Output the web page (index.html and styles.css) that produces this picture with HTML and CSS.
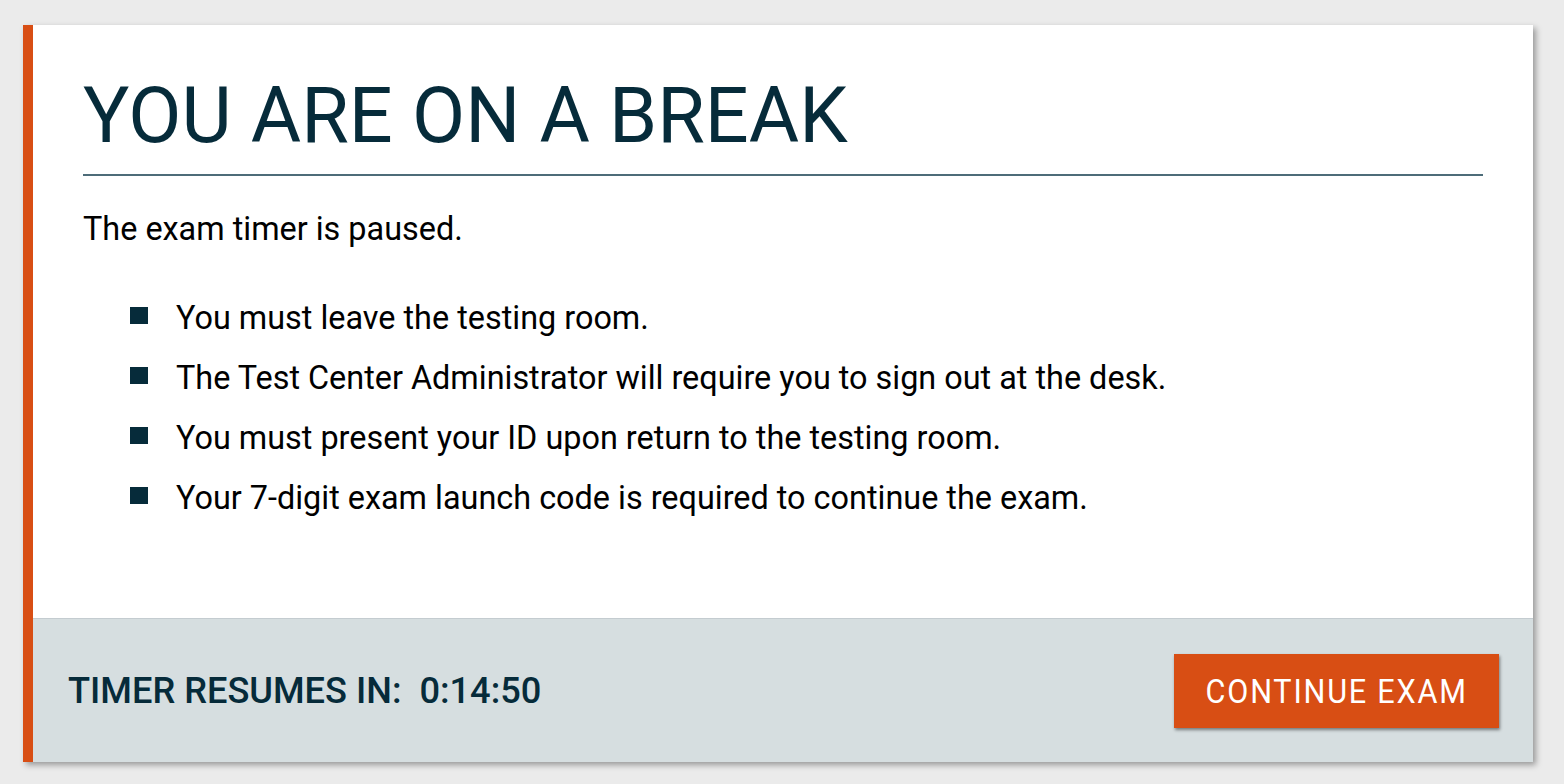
FILE: index.html
```html
<!DOCTYPE html>
<html lang="en">
<head>
    <meta charset="UTF-8">
    <title>Break</title>
    <link rel="stylesheet" href="styles.css">
</head>
<body>
    <div class="card">
        <div class="content">
            <h1>YOU ARE ON A BREAK</h1>
            <p class="intro">The exam timer is paused.</p>
            <ul class="rules">
                <li>You must leave the testing room.</li>
                <li>The Test Center Administrator will require you to sign out at the desk.</li>
                <li>You must present your ID upon return to the testing room.</li>
                <li>Your 7-digit exam launch code is required to continue the exam.</li>
            </ul>
        </div>
        <div class="footer">
            <div class="timer">TIMER RESUMES IN:&nbsp; 0:14:50</div>
            <button class="continue"><span>CONTINUE EXAM</span></button>
        </div>
    </div>
</body>
</html>
```

FILE: styles.css
```css
body {
    margin: 0;
    padding: 25px 31px 22px 23px;
    background: #ebebeb;
    font-family: Roboto, "Liberation Sans", sans-serif;
}
.card {
    height: 737px;
    box-sizing: border-box;
    background: #fff;
    border-left: 10px solid #d84e14;
    box-shadow: 3px 3px 6px rgba(0, 0, 0, 0.35);
    display: flex;
    flex-direction: column;
}
.content {
    flex: 1;
    padding: 0 50px;
}
h1 {
    margin: 0;
    padding: 51px 0 18px;
    font-size: 77.3px;
    font-weight: 400;
    line-height: 80px;
    color: #062b3a;
    border-bottom: 2px solid #4d6c79;
}
.intro {
    margin: 33px 0 0;
    font-size: 32.4px;
    line-height: 40px;
    color: #000;
}
.rules {
    list-style: none;
    margin: 49px 0 0;
    padding: 0 0 0 46px;
}
.rules li {
    position: relative;
    padding-left: 47px;
    font-size: 32.4px;
    line-height: 40px;
    margin-bottom: 20px;
    color: #000;
}
.rules li::before {
    content: "";
    position: absolute;
    left: 1px;
    top: 9px;
    width: 18px;
    height: 17px;
    background: #062b3a;
}
.footer {
    height: 144px;
    box-sizing: border-box;
    background: #d6dee0;
    border-top: 1px solid #c4ccd0;
    display: flex;
    align-items: center;
    justify-content: space-between;
    padding: 0 34px 0 35px;
}
.timer {
    font-size: 36.2px;
    font-weight: 500;
    color: #062b3a;
}
.continue {
    height: 74px;
    width: 325px;
    border: none;
    background: #d84e14;
    color: #fff;
    font-family: Roboto, "Liberation Sans", sans-serif;
    font-size: 34px;
    box-shadow: 1px 2px 3px rgba(0, 0, 0, 0.45);
    cursor: pointer;
}
.continue span {
    display: inline-block;
    letter-spacing: 2px;
    transform: scaleX(0.9);
}
```
